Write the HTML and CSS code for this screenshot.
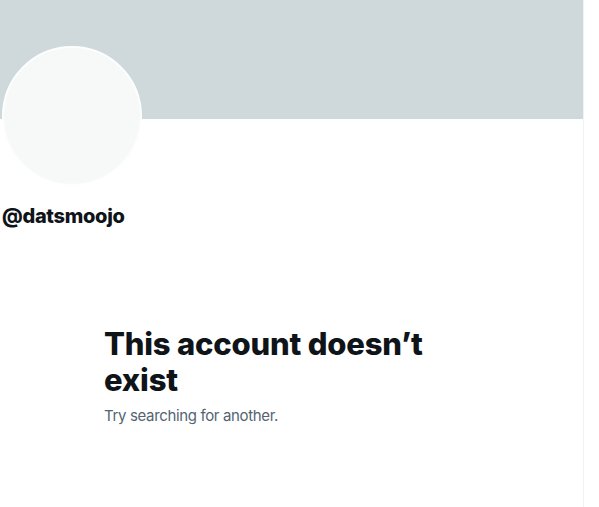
FILE: index.html
```html
<!DOCTYPE html>
<html lang="en">
<head>
  <meta charset="UTF-8" />
  <meta name="viewport" content="width=device-width, initial-scale=1.0"/>
  <title>@datsmoojo</title>
  <link rel="stylesheet" href="styles.css">
</head>
<body>

  <!-- profile column -->
  <main class="profile">
    <div class="banner"></div>

    <div class="profile-head">
      <div class="avatar"></div>
      <div class="handle">@datsmoojo</div>
    </div>

    <!-- empty state -->
    <section class="empty-state">
      <h1>This account doesn’t exist</h1>
      <p>Try searching for another.</p>
    </section>
  </main>

</body>
</html>
```

FILE: styles.css
```css
* {
  margin: 0;
  padding: 0;
  box-sizing: border-box;
}

body, html {
  height: 100%;
  background: #fff;
  font-family: 'Inter', 'Segoe UI', sans-serif;
  color: #0f1419;
  overflow: hidden;
}

.profile {
  width: 584px;
  height: 100%;
  border-right: 1px solid #eff3f4;
}

.banner {
  height: 119px;
  background: #cfd9dc;
}

.profile-head {
  padding: 0 0 0 2px;
}

.avatar {
  width: 140px;
  height: 140px;
  margin-top: -73px;
  border-radius: 50%;
  background: #f7f9f9;
  border: 2px solid #fdfefe;
}

.handle {
  margin-top: 18px;
  font-size: 20px;
  font-weight: 800;
  line-height: 24px;
  letter-spacing: -0.3px;
}

.empty-state {
  width: 340px;
  margin: 98px 0 0 104px;
}

.empty-state h1 {
  font-size: 31px;
  font-weight: 800;
  line-height: 36px;
  letter-spacing: -0.2px;
}

.empty-state p {
  margin-top: 8px;
  font-size: 15px;
  line-height: 20px;
  letter-spacing: -0.35px;
  color: #536471;
}
```
